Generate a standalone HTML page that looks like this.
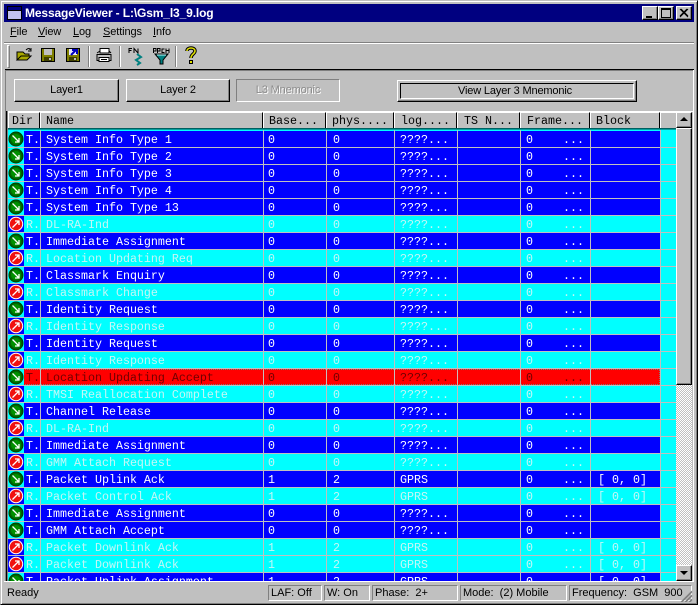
<!DOCTYPE html>
<html><head><meta charset="utf-8"><style>
*{box-sizing:border-box}
html,body{margin:0;padding:0;width:698px;height:605px;overflow:hidden;background:#c0c0c0;font-family:"Liberation Sans",sans-serif;font-size:11px;color:#000}
.a{position:absolute}
#win{position:absolute;left:0;top:0;width:698px;height:605px;border:1px solid;border-color:#c0c0c0 #000 #000 #c0c0c0;box-shadow:inset 1px 1px 0 #fff,inset -1px -1px 0 #808080}
#title{position:absolute;left:4px;top:4px;width:690px;height:18px;background:#000080;color:#fff;font-weight:bold;font-size:12px;line-height:18px;white-space:nowrap}
#title span{position:absolute;left:21px;top:0;letter-spacing:-.13px}
.wb{position:absolute;top:6px;width:16px;height:14px;background:#c0c0c0;border:1px solid;border-color:#fff #000 #000 #fff;box-shadow:inset -1px -1px 0 #808080}
.menu{position:absolute;top:25px;line-height:14px;font-size:11px;letter-spacing:-.1px}
.btn{position:absolute;top:79px;width:104px;height:23px;background:#c0c0c0;border:1px solid;border-color:#fff #000 #000 #fff;box-shadow:inset -1px -1px 0 #808080;text-align:center;line-height:21px;font-size:11px;letter-spacing:-.15px}
.sep{position:absolute;top:46px;width:2px;height:21px;border-left:1px solid #808080;border-right:1px solid #fff}
#list{position:absolute;left:8px;top:129px;width:668px;height:452px;overflow:hidden;background:#0ff;border-top:1px solid #08a0a0}
.r{position:absolute;left:0;width:652px;height:16px;font:11.67px/16px "Liberation Mono",monospace;white-space:pre}
.r span{position:absolute;top:1px}
.r span:nth-child(1){left:18px}
.r span:nth-child(2){left:38px}
.r span:nth-child(3){left:260px}
.r span:nth-child(4){left:325px}
.r span:nth-child(5){left:392px}
.r span:nth-child(6){left:518px}
.r span:nth-child(7){left:555px}
.r span:nth-child(8){left:590px}
.b{background:#0000ff;color:#fff}
.c{background:#00ffff;color:#c4f6f6}
.s{background:#ff0000;color:#700000;outline:1px dotted #808080;outline-offset:-1px}
.ic{position:absolute;left:0;width:16px;height:16px}
.ic.cy{background:#0ff}.ic.bl{background:#00f}
.ic svg{position:absolute;left:0;top:0}
.hl{position:absolute;left:0;width:668px;height:1px;background:#c0c0c0}
.vl{position:absolute;top:0;width:1px;height:452px;background:#c0c0c0}
.h{position:absolute;top:112px;height:16px;background:#c0c0c0;border-top:1px solid #fff;border-left:1px solid #fff;border-right:1px solid #000;font:11.67px/16px "Liberation Mono",monospace;white-space:pre;padding-left:3px}
.sb{position:absolute;width:16px;height:16px;background:#c0c0c0;border:1px solid;border-color:#fff #000 #000 #fff;box-shadow:inset -1px -1px 0 #808080}
.st{position:absolute;top:585px;height:16px;border:1px solid;border-color:#808080 #fff #fff #808080;line-height:14px;padding-left:2px;white-space:pre;font-size:11px;overflow:hidden}
</style></head><body>
<div id="win"></div>

<div id="title">
<svg class="a" style="left:3px;top:2px" width="15" height="14"><rect x=".5" y=".5" width="14" height="13" fill="#fff" stroke="#000"/><rect x="1" y="1" width="13" height="3" fill="#000080"/><rect x="1" y="4" width="13" height="1" fill="#000"/><rect x="1" y="5" width="13" height="8" fill="#c0c0f0"/></svg>
<span>MessageViewer - L:\Gsm_l3_9.log</span>
</div>
<div class="wb" style="left:642px"><div class="a" style="left:3px;top:9px;width:6px;height:2px;background:#000"></div></div>
<div class="wb" style="left:658px"><div class="a" style="left:2px;top:1px;width:10px;height:10px;border:1px solid #000;border-top-width:2px"></div></div>
<div class="wb" style="left:676px"><svg class="a" style="left:2px;top:1px" width="10" height="10"><path d="M1 1L9 9M2 1L9 8M1 9L9 1M1 8L8 1" stroke="#000" stroke-width="1" fill="none"/></svg></div>

<div class="menu" style="left:10px"><u>F</u>ile</div>
<div class="menu" style="left:38px"><u>V</u>iew</div>
<div class="menu" style="left:73px"><u>L</u>og</div>
<div class="menu" style="left:103px"><u>S</u>ettings</div>
<div class="menu" style="left:153px"><u>I</u>nfo</div>

<div class="a" style="left:4px;top:42px;width:690px;height:2px;border-top:1px solid #808080;border-bottom:1px solid #fff"></div>
<div class="a" style="left:7px;top:45px;width:3px;height:23px;border:1px solid;border-color:#fff #808080 #808080 #fff"></div>
<div class="sep" style="left:88px"></div><div class="sep" style="left:119px"></div><div class="sep" style="left:175px"></div>

<svg class="a" style="left:0;top:40px" width="215" height="30">
<!-- open -->
<path d="M17 20V12H23L25 14H29V16H21L17 20H27L31 16H21" fill="#a8a800" stroke="#000"/>
<path d="M26 10C28 8 30 8 30 10M31 8V11H28" fill="none" stroke="#000"/>
<!-- save -->
<rect x="41.5" y="8.500" width="13" height="13" fill="#808000" stroke="#000"/><rect x="44" y="9" width="8" height="6" fill="#c0c0c0"/><rect x="44" y="17" width="8" height="4" fill="#404000"/><rect x="49" y="18" width="2" height="2" fill="#c0c0c0"/>
<!-- save as -->
<rect x="66.5" y="8.500" width="13" height="13" fill="#808000" stroke="#000"/><rect x="69" y="9" width="8" height="6" fill="#e8e8ff"/><rect x="69" y="17" width="8" height="4" fill="#404000"/><rect x="74" y="18" width="2" height="2" fill="#c0c0c0"/>
<path d="M71 15L76 10M72 10H77V14" stroke="#0000c0" stroke-width="2" fill="none"/>
<!-- print -->
<path d="M100 8.500H109V13H100Z" fill="#fff" stroke="#000"/>
<path d="M97 14.500H111V20.500H97Z" fill="#c0c0c0" stroke="#000"/>
<path d="M99 17.500H109V21.500H99Z" fill="#fff" stroke="#000"/>
<path d="M97 13L100 11M111 13L109 11M101 19.500H107" stroke="#000" fill="none"/>
<!-- FN -->
<path d="M129 13V8.500H132M129 10.500H131.500M134 13V8.500L138 13V8.500" stroke="#000" fill="none" stroke-width="1"/>
<path d="M137 14L141 17L136 20L140 23L137 25" fill="none" stroke="#008080" stroke-width="2"/>
<!-- PPCH -->
<path d="M153.500 13V8.500H156V11H153.500M157.500 13V8.500H160V11H157.500M164.500 9H162V12.500H164.500M166 13V8.500M169 13V8.500M166 10.500H169" stroke="#000" fill="none" stroke-width="1"/>
<path d="M155 14H168L163 20V24H160V20Z" fill="#008080" stroke="#000"/>
<path d="M157 15H166" stroke="#c0ffff"/>
<!-- help -->
<path d="M187 11C187 7 195 7 195 11C195 14 191 14 191 18" fill="none" stroke="#000" stroke-width="3.500"/>
<path d="M187 11C187 7 195 7 195 11C195 14 191 14 191 18" fill="none" stroke="#e0e000" stroke-width="1.500"/>
<rect x="189.500" y="20.500" width="3" height="3" fill="#e0e000" stroke="#000"/>
</svg>

<div class="a" style="left:5px;top:69px;width:689px;height:42px;border-top:1px solid #000;border-left:1px solid #000"></div>
<div class="a" style="left:5px;top:70px;width:688px;height:1px;background:#808080"></div>
<div class="a" style="left:693px;top:70px;width:1px;height:512px;background:#fff"></div>
<div class="a" style="left:5px;top:70px;width:1px;height:512px;background:#808080"></div>

<div class="btn" style="left:14px;width:105px">Layer1</div>
<div class="btn" style="left:126px;width:104px">Layer 2</div>
<div class="btn" style="left:236px;width:104px;border-color:#808080 #fff #fff #808080;box-shadow:none;color:#8c8c8c;text-shadow:1px 1px 0 #fff">L3 Mnemonic</div>
<div class="btn" style="left:397px;top:80px;width:240px;height:22px;line-height:20px"><div class="a" style="left:2px;top:2px;width:234px;height:16px;border:1px solid;border-color:#000 #fff #fff #000"></div><span style="position:relative;left:-2px">View Layer 3 Mnemonic</span></div>

<!-- list frame -->
<div class="a" style="left:6px;top:111px;width:687px;height:1px;background:#fff"></div>
<div class="a" style="left:6px;top:111px;width:2px;height:471px;background:#000;border-right:1px solid #808080"></div>

<!-- header -->
<div class="h" style="left:8px;width:32px">Dir</div>
<div class="h" style="left:40px;width:223px;padding-left:5px">Name</div>
<div class="h" style="left:263px;width:63px;padding-left:5px">Base...</div>
<div class="h" style="left:326px;width:68px;padding-left:5px">phys....</div>
<div class="h" style="left:394px;width:63px;padding-left:6px">log....</div>
<div class="h" style="left:457px;width:63px;padding-left:6px">TS N...</div>
<div class="h" style="left:520px;width:70px;padding-left:6px">Frame...</div>
<div class="h" style="left:590px;width:70px;padding-left:5px">Block</div>
<div class="h" style="left:660px;width:16px;border-right:0"></div>
<div class="a" style="left:8px;top:128px;width:668px;height:1px;background:#006060"></div>

<div id="list">
<svg width="0" height="0" style="position:absolute"><defs>
<g id="gi"><circle cx="8" cy="8" r="7" fill="#006400" stroke="#004000" stroke-width="1"/><circle cx="8" cy="8" r="5" fill="#009000"/><path d="M4.500 4.500L11 11M11 7V11H7" stroke="#fff" stroke-width="1.300" fill="none"/></g>
<g id="ri"><circle cx="8" cy="8" r="7.200" fill="#fff"/><circle cx="8" cy="8" r="6.200" fill="#f01010"/><path d="M4.500 11.500L11 5M7 5H11V9" stroke="#fff" stroke-width="1.300" fill="none"/></g>
</defs></svg>

<div class="r b" style="top:1px"><span>T.</span><span>System Info Type 1</span><span>0</span><span>0</span><span>????...</span><span>0</span><span>...</span></div><div class="ic cy" style="top:1px"><svg width="16" height="16"><use href="#gi"/></svg></div>
<div class="r b" style="top:18px"><span>T.</span><span>System Info Type 2</span><span>0</span><span>0</span><span>????...</span><span>0</span><span>...</span></div><div class="ic cy" style="top:18px"><svg width="16" height="16"><use href="#gi"/></svg></div>
<div class="r b" style="top:35px"><span>T.</span><span>System Info Type 3</span><span>0</span><span>0</span><span>????...</span><span>0</span><span>...</span></div><div class="ic cy" style="top:35px"><svg width="16" height="16"><use href="#gi"/></svg></div>
<div class="r b" style="top:52px"><span>T.</span><span>System Info Type 4</span><span>0</span><span>0</span><span>????...</span><span>0</span><span>...</span></div><div class="ic cy" style="top:52px"><svg width="16" height="16"><use href="#gi"/></svg></div>
<div class="r b" style="top:69px"><span>T.</span><span>System Info Type 13</span><span>0</span><span>0</span><span>????...</span><span>0</span><span>...</span></div><div class="ic cy" style="top:69px"><svg width="16" height="16"><use href="#gi"/></svg></div>
<div class="r c" style="top:86px"><span>R.</span><span>DL-RA-Ind</span><span>0</span><span>0</span><span>????...</span><span>0</span><span>...</span></div><div class="ic bl" style="top:86px"><svg width="16" height="16"><use href="#ri"/></svg></div>
<div class="r b" style="top:103px"><span>T.</span><span>Immediate Assignment</span><span>0</span><span>0</span><span>????...</span><span>0</span><span>...</span></div><div class="ic cy" style="top:103px"><svg width="16" height="16"><use href="#gi"/></svg></div>
<div class="r c" style="top:120px"><span>R.</span><span>Location Updating Req</span><span>0</span><span>0</span><span>????...</span><span>0</span><span>...</span></div><div class="ic bl" style="top:120px"><svg width="16" height="16"><use href="#ri"/></svg></div>
<div class="r b" style="top:137px"><span>T.</span><span>Classmark Enquiry</span><span>0</span><span>0</span><span>????...</span><span>0</span><span>...</span></div><div class="ic cy" style="top:137px"><svg width="16" height="16"><use href="#gi"/></svg></div>
<div class="r c" style="top:154px"><span>R.</span><span>Classmark Change</span><span>0</span><span>0</span><span>????...</span><span>0</span><span>...</span></div><div class="ic bl" style="top:154px"><svg width="16" height="16"><use href="#ri"/></svg></div>
<div class="r b" style="top:171px"><span>T.</span><span>Identity Request</span><span>0</span><span>0</span><span>????...</span><span>0</span><span>...</span></div><div class="ic cy" style="top:171px"><svg width="16" height="16"><use href="#gi"/></svg></div>
<div class="r c" style="top:188px"><span>R.</span><span>Identity Response</span><span>0</span><span>0</span><span>????...</span><span>0</span><span>...</span></div><div class="ic bl" style="top:188px"><svg width="16" height="16"><use href="#ri"/></svg></div>
<div class="r b" style="top:205px"><span>T.</span><span>Identity Request</span><span>0</span><span>0</span><span>????...</span><span>0</span><span>...</span></div><div class="ic cy" style="top:205px"><svg width="16" height="16"><use href="#gi"/></svg></div>
<div class="r c" style="top:222px"><span>R.</span><span>Identity Response</span><span>0</span><span>0</span><span>????...</span><span>0</span><span>...</span></div><div class="ic bl" style="top:222px"><svg width="16" height="16"><use href="#ri"/></svg></div>
<div class="r s" style="top:239px"><span>T.</span><span>Location Updating Accept</span><span>0</span><span>0</span><span>????...</span><span>0</span><span>...</span></div><div class="ic cy" style="top:239px"><svg width="16" height="16"><use href="#gi"/></svg></div>
<div class="r c" style="top:256px"><span>R.</span><span>TMSI Reallocation Complete</span><span>0</span><span>0</span><span>????...</span><span>0</span><span>...</span></div><div class="ic bl" style="top:256px"><svg width="16" height="16"><use href="#ri"/></svg></div>
<div class="r b" style="top:273px"><span>T.</span><span>Channel Release</span><span>0</span><span>0</span><span>????...</span><span>0</span><span>...</span></div><div class="ic cy" style="top:273px"><svg width="16" height="16"><use href="#gi"/></svg></div>
<div class="r c" style="top:290px"><span>R.</span><span>DL-RA-Ind</span><span>0</span><span>0</span><span>????...</span><span>0</span><span>...</span></div><div class="ic bl" style="top:290px"><svg width="16" height="16"><use href="#ri"/></svg></div>
<div class="r b" style="top:307px"><span>T.</span><span>Immediate Assignment</span><span>0</span><span>0</span><span>????...</span><span>0</span><span>...</span></div><div class="ic cy" style="top:307px"><svg width="16" height="16"><use href="#gi"/></svg></div>
<div class="r c" style="top:324px"><span>R.</span><span>GMM Attach Request</span><span>0</span><span>0</span><span>????...</span><span>0</span><span>...</span></div><div class="ic bl" style="top:324px"><svg width="16" height="16"><use href="#ri"/></svg></div>
<div class="r b" style="top:341px"><span>T.</span><span>Packet Uplink Ack</span><span>1</span><span>2</span><span>GPRS</span><span>0</span><span>...</span><span>[ 0, 0]</span></div><div class="ic cy" style="top:341px"><svg width="16" height="16"><use href="#gi"/></svg></div>
<div class="r c" style="top:358px"><span>R.</span><span>Packet Control Ack</span><span>1</span><span>2</span><span>GPRS</span><span>0</span><span>...</span><span>[ 0, 0]</span></div><div class="ic bl" style="top:358px"><svg width="16" height="16"><use href="#ri"/></svg></div>
<div class="r b" style="top:375px"><span>T.</span><span>Immediate Assignment</span><span>0</span><span>0</span><span>????...</span><span>0</span><span>...</span></div><div class="ic cy" style="top:375px"><svg width="16" height="16"><use href="#gi"/></svg></div>
<div class="r b" style="top:392px"><span>T.</span><span>GMM Attach Accept</span><span>0</span><span>0</span><span>????...</span><span>0</span><span>...</span></div><div class="ic cy" style="top:392px"><svg width="16" height="16"><use href="#gi"/></svg></div>
<div class="r c" style="top:409px"><span>R.</span><span>Packet Downlink Ack</span><span>1</span><span>2</span><span>GPRS</span><span>0</span><span>...</span><span>[ 0, 0]</span></div><div class="ic bl" style="top:409px"><svg width="16" height="16"><use href="#ri"/></svg></div>
<div class="r c" style="top:426px"><span>R.</span><span>Packet Downlink Ack</span><span>1</span><span>2</span><span>GPRS</span><span>0</span><span>...</span><span>[ 0, 0]</span></div><div class="ic bl" style="top:426px"><svg width="16" height="16"><use href="#ri"/></svg></div>
<div class="r b" style="top:443px"><span>T.</span><span>Packet Uplink Assignment</span><span>1</span><span>2</span><span>GPRS</span><span>0</span><span>...</span><span>[ 0, 0]</span></div><div class="ic cy" style="top:443px"><svg width="16" height="16"><use href="#gi"/></svg></div>

<div class="hl" style="top:17px"></div><div class="hl" style="top:34px"></div><div class="hl" style="top:51px"></div><div class="hl" style="top:68px"></div><div class="hl" style="top:85px"></div><div class="hl" style="top:102px"></div><div class="hl" style="top:119px"></div><div class="hl" style="top:136px"></div><div class="hl" style="top:153px"></div><div class="hl" style="top:170px"></div><div class="hl" style="top:187px"></div><div class="hl" style="top:204px"></div><div class="hl" style="top:221px"></div><div class="hl" style="top:238px"></div><div class="hl" style="top:255px"></div><div class="hl" style="top:272px"></div><div class="hl" style="top:289px"></div><div class="hl" style="top:306px"></div><div class="hl" style="top:323px"></div><div class="hl" style="top:340px"></div><div class="hl" style="top:357px"></div><div class="hl" style="top:374px"></div><div class="hl" style="top:391px"></div><div class="hl" style="top:408px"></div><div class="hl" style="top:425px"></div><div class="hl" style="top:442px"></div>
<div class="vl" style="left:32px"></div><div class="vl" style="left:255px"></div><div class="vl" style="left:318px"></div><div class="vl" style="left:386px"></div><div class="vl" style="left:449px"></div><div class="vl" style="left:512px"></div><div class="vl" style="left:582px"></div><div class="vl" style="left:652px"></div>
</div>

<!-- scrollbar -->
<div class="a" style="left:676px;top:128px;width:16px;height:437px;background-color:#fff;background-image:conic-gradient(#c0c0c0 25%,#fff 0 50%,#c0c0c0 0 75%,#fff 0);background-size:2px 2px"></div>
<div class="sb" style="left:676px;top:112px"><div class="a" style="left:3px;top:4px;width:0;height:0;border-left:4px solid transparent;border-right:4px solid transparent;border-bottom:4px solid #000"></div></div>
<div class="sb" style="left:676px;top:128px;height:257px"></div>
<div class="sb" style="left:676px;top:565px"><div class="a" style="left:3px;top:5px;width:0;height:0;border-left:4px solid transparent;border-right:4px solid transparent;border-top:4px solid #000"></div></div>
<div class="a" style="left:692px;top:112px;width:1px;height:469px;background:#c0c0c0"></div>

<!-- status -->
<div class="a" style="left:4px;top:581px;width:690px;height:1px;background:#fff"></div>
<div class="a" style="left:7px;top:585px;line-height:16px">Ready</div>
<div class="st" style="left:268px;width:54px">LAF: Off</div>
<div class="st" style="left:324px;width:46px">W: On</div>
<div class="st" style="left:372px;width:86px">Phase:  2+</div>
<div class="st" style="left:460px;width:107px">Mode:  (2) Mobile</div>
<div class="st" style="left:569px;width:123px">Frequency:  GSM  900</div>
<svg class="a" style="left:680px;top:590px" width="13" height="12"><path d="M1 12L12 1M2 12L12 2M5 12L12 5M6 12L12 6M9 12L12 9M10 12L12 10" stroke="#808080" fill="none"/></svg>
</body></html>
